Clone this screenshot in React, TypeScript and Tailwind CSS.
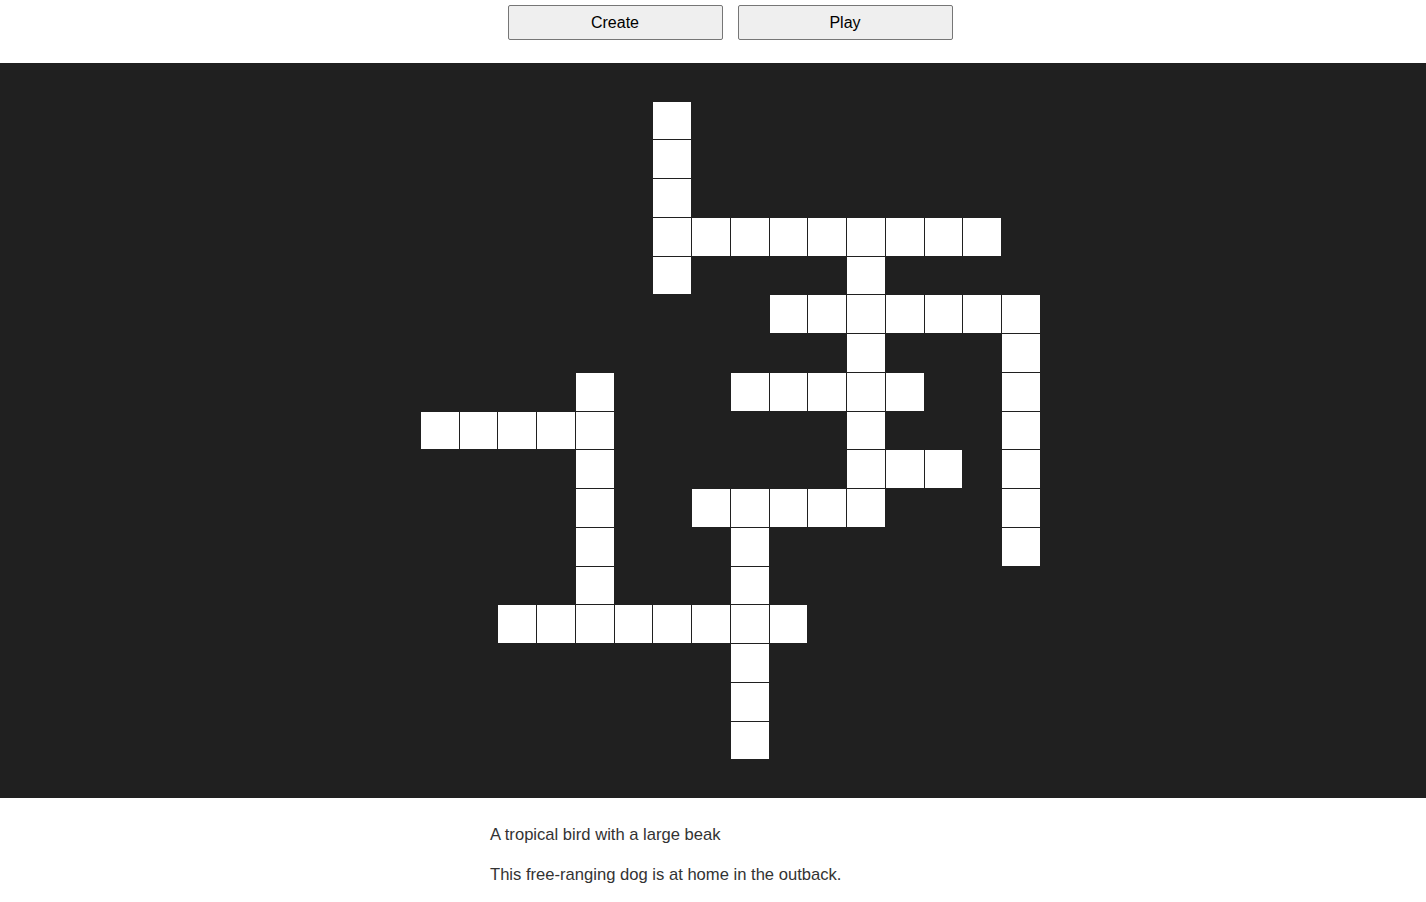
import React from "react";

// words on the board, col/row counted from the first used cell
const words: { col: number; row: number; len: number; dir: "a" | "d" }[] = [
  { col: 6, row: 0, len: 5, dir: "d" },
  { col: 6, row: 3, len: 9, dir: "a" },
  { col: 11, row: 3, len: 8, dir: "d" },
  { col: 9, row: 5, len: 7, dir: "a" },
  { col: 15, row: 5, len: 7, dir: "d" },
  { col: 8, row: 7, len: 5, dir: "a" },
  { col: 4, row: 7, len: 7, dir: "d" },
  { col: 0, row: 8, len: 5, dir: "a" },
  { col: 11, row: 9, len: 3, dir: "a" },
  { col: 7, row: 10, len: 5, dir: "a" },
  { col: 8, row: 10, len: 7, dir: "d" },
  { col: 2, row: 13, len: 8, dir: "a" },
];

function buildCells() {
  const set = new Set<string>();
  for (const w of words) {
    for (let i = 0; i < w.len; i++) {
      const c = w.dir === "a" ? w.col + i : w.col;
      const r = w.dir === "d" ? w.row + i : w.row;
      set.add(`${c},${r}`);
    }
  }
  return set;
}

const filled = buildCells();

export default function App() {
  const cells = [];
  // full board is 19 x 19; words sit at offset col +2, row +1
  for (let r = 0; r < 19; r++) {
    for (let c = 0; c < 19; c++) {
      const on = filled.has(`${c - 2},${r - 1}`);
      cells.push(<div key={`${c}-${r}`} className={on ? "bg-white" : ""} />);
    }
  }

  return (
    <div className="min-h-screen bg-white font-['Liberation_Sans',Arial,sans-serif]">
      <div className="flex h-[63px] justify-center gap-[15px] pl-[34px] pt-[5px]">
        <button className="h-[35px] w-[215px] rounded-[2px] border border-[#767676] bg-[#efefef] text-[16px] text-black">
          Create
        </button>
        <button className="h-[35px] w-[215px] rounded-[2px] border border-[#767676] bg-[#efefef] text-[16px] text-black">
          Play
        </button>
      </div>

      <div className="flex justify-center bg-[#202020] pr-[4px]">
        <div className="grid h-[735px] w-[735px] grid-cols-[repeat(19,1fr)] grid-rows-[repeat(19,1fr)] gap-px">
          {cells}
        </div>
      </div>

      <div className="mx-auto flex w-[446px] flex-col gap-4 pt-[25px] text-[16.6px] leading-6 text-[#333]">
        <p>A tropical bird with a large beak</p>
        <p>This free-ranging dog is at home in the outback.</p>
      </div>
    </div>
  );
}
